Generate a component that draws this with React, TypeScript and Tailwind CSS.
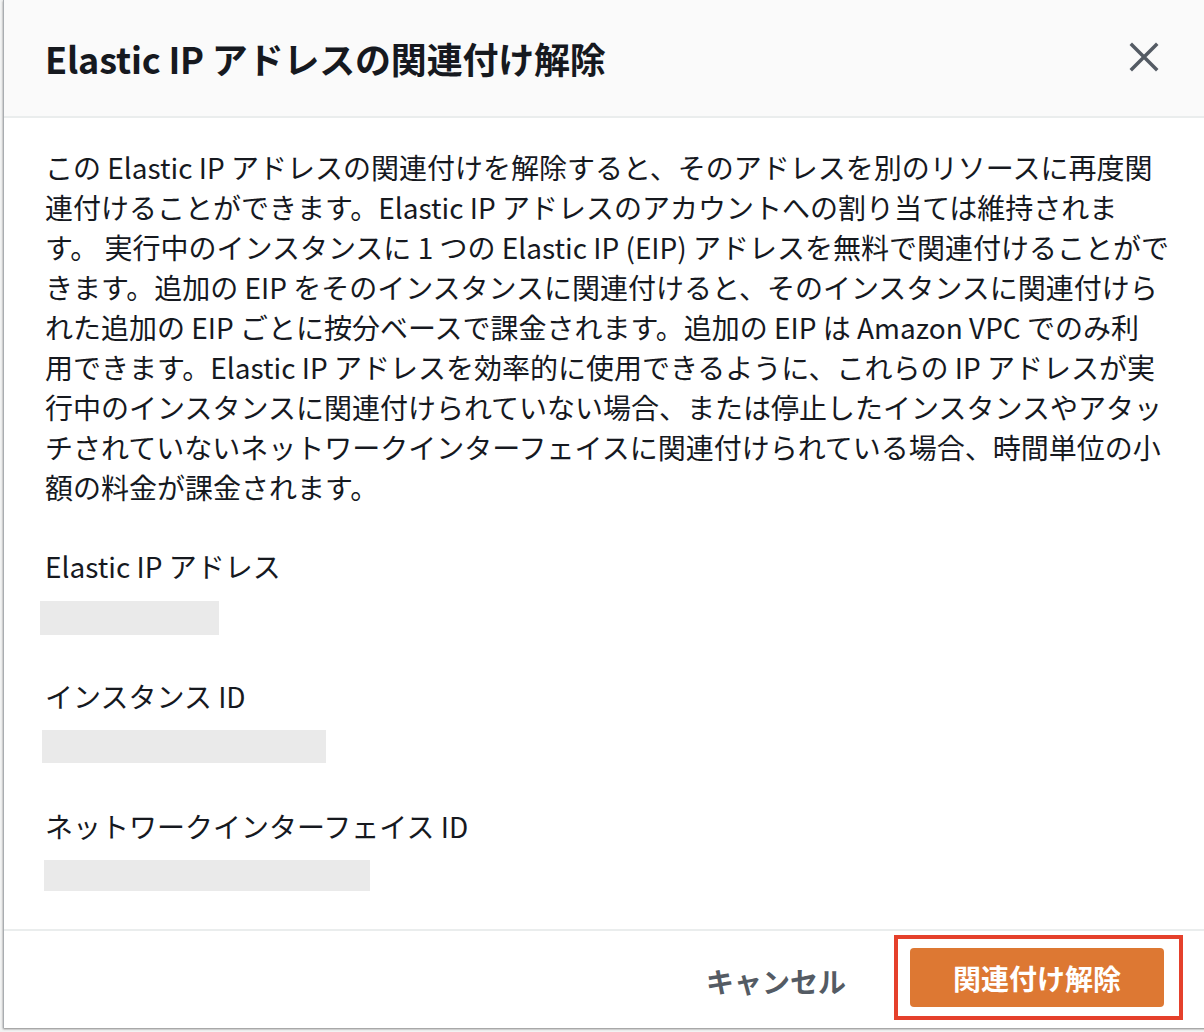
import React from "react";

const lines = [
  "この Elastic IP アドレスの関連付けを解除すると、そのアドレスを別のリソースに再度関",
  "連付けることができます。Elastic IP アドレスのアカウントへの割り当ては維持されま",
  "す。 実行中のインスタンスに 1 つの Elastic IP (EIP) アドレスを無料で関連付けることがで",
  "きます。追加の EIP をそのインスタンスに関連付けると、そのインスタンスに関連付けら",
  "れた追加の EIP ごとに按分ベースで課金されます。追加の EIP は Amazon VPC でのみ利",
  "用できます。Elastic IP アドレスを効率的に使用できるように、これらの IP アドレスが実",
  "行中のインスタンスに関連付けられていない場合、または停止したインスタンスやアタッ",
  "チされていないネットワークインターフェイスに関連付けられている場合、時間単位の小",
  "額の料金が課金されます。",
];

export default function App() {
  return (
    <div
      className="w-[1204px] h-[1032px] overflow-hidden bg-[#f2f3f3] pl-[3px] text-[#16191f]"
      style={{ fontFamily: '"Noto Sans CJK JP", "Noto Sans", sans-serif' }}
    >
      <div className="flex h-[1028px] w-[1210px] flex-col border-l border-[#a9adb1] bg-white shadow-[0_1px_2px_rgba(0,0,0,0.45)]">
        <div className="flex h-[118px] shrink-0 items-center justify-between border-b-2 border-[#eaeded] bg-[#fafafa] pl-[41px] pr-[54px]">
          <h1 className="text-[36px] font-bold leading-[40px] tracking-[-0.2px]">
            Elastic IP アドレスの関連付け解除
          </h1>
          <svg width="30" height="30" viewBox="0 0 30 30" className="mt-[-2px]">
            <path d="M3 3 L27 27 M27 3 L3 27" stroke="#545b64" strokeWidth="3.5" strokeLinecap="square" />
          </svg>
        </div>
        <div className="flex flex-1 flex-col pl-[41px] pt-[29px]">
          <div className="text-[28px] leading-[40px]">
            {lines.map((l, i) => (
              <div key={i} className="whitespace-nowrap">{l}</div>
            ))}
          </div>
          <div className="mt-[39px] text-[28px] leading-[40px]">Elastic IP アドレス</div>
          <div className="ml-[-5px] mt-[15px] h-[34px] w-[179px] bg-[#eaeaea]" />
          <div className="mt-[41px] text-[28px] leading-[40px]">インスタンス ID</div>
          <div className="ml-[-3px] mt-[14px] h-[33px] w-[284px] bg-[#eaeaea]" />
          <div className="mt-[43px] text-[28px] leading-[40px]">ネットワークインターフェイス ID</div>
          <div className="ml-[-1px] mt-[14px] h-[31px] w-[326px] bg-[#eaeaea]" />
        </div>
        <div className="flex h-[99px] shrink-0 items-center justify-end border-t-2 border-[#eaeded] pr-[30px]">
          <span className="mr-[48px] mt-[2px] text-[28px] font-bold text-[#545b64]">キャンセル</span>
          <div className="mt-[-4px] border-[4px] border-[#e5402b] pb-[9px] pl-[12px] pr-[15px] pt-[9px]">
            <button className="flex h-[59px] w-[254px] items-center justify-center rounded-[4px] bg-[#dd7833] text-[28px] font-bold text-white">
              関連付け解除
            </button>
          </div>
        </div>
      </div>
    </div>
  );
}
